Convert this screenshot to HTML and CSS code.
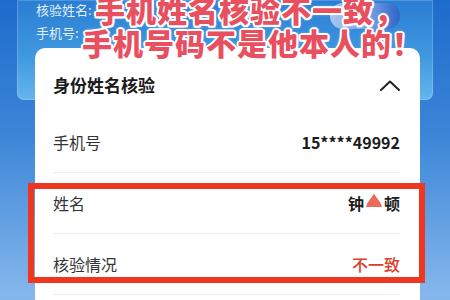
FILE: index.html
```html
<!DOCTYPE html>
<html lang="zh">
<head>
<meta charset="utf-8">
<link rel="stylesheet" href="styles.css">
</head>
<body>
<div class="stage">
  <div class="top-panel">
    <div class="panel-lines">
      <div class="panel-line">核验姓名:</div>
      <div class="panel-line">手机号:</div>
    </div>
    <div class="panel-btn"></div>
  </div>

  <div class="card">
    <div class="card-head">
      <span class="card-title">身份姓名核验</span>
      <svg class="chev" width="20" height="11" viewBox="0 0 20 11"><polyline points="1,10 10,1.5 19,10" fill="none" stroke="#222" stroke-width="2" stroke-linecap="round" stroke-linejoin="round"/></svg>
    </div>
    <div class="row">
      <span class="label">手机号</span>
      <span class="value">15****49992</span>
    </div>
    <div class="row">
      <span class="label">姓名</span>
      <span class="value name">钟<svg class="mask" width="16" height="14" viewBox="0 0 16 14"><path d="M0 14 C1 9 5 6 8 0.5 C11 6 15 9 16 14 Z" fill="#ea6a5c"/></svg>顿</span>
    </div>
    <div class="row">
      <span class="label">核验情况</span>
      <span class="value bad">不一致</span>
    </div>
  </div>

  <div class="caption">
    <div class="cap-line l1">手机姓名核验不一致，</div>
    <div class="cap-line l2">手机号码不是他本人的！</div>
  </div>

  <div class="redbox"></div>
</div>
</body>
</html>
```

FILE: styles.css
```css
html, body {
  margin: 0;
  padding: 0;
}
body {
  width: 450px;
  height: 300px;
  overflow: hidden;
  background: linear-gradient(180deg, #1d6bcb 0%, #3c86d8 45%, #86b8ec 100%);
  font-family: "Noto Sans CJK SC", "Noto Sans", sans-serif;
}
.stage {
  position: relative;
  width: 450px;
  height: 300px;
}
.top-panel {
  margin: 0 17px;
  height: 100px;
  box-sizing: border-box;
  border-radius: 0 0 7px 7px;
  background: linear-gradient(180deg, #2a7ed3 0%, #3f97df 55%, #66b6ec 100%);
  box-shadow: inset 0 0 0 1px rgba(255,255,255,0.18);
  padding: 0 33px 0 19px;
  display: flex;
  justify-content: space-between;
  align-items: flex-start;
}
.panel-lines {
  display: flex;
  flex-direction: column;
  gap: 5px;
  padding-top: 1px;
}
.panel-line {
  font-size: 13px;
  line-height: 18px;
  color: rgba(255,255,255,0.88);
}
.panel-btn {
  margin-top: 3px;
  width: 70px;
  height: 26px;
  border-radius: 13px;
  background: linear-gradient(90deg, #a9c6ee 0%, #6f9be0 60%, #2f63c8 100%);
}
.card {
  position: relative;
  margin: -52px 30px 0 35px;
  background: #fff;
  border-radius: 10px 10px 0 0;
  padding: 0 20px 0 18px;
  height: 260px;
}
.card-head {
  display: flex;
  justify-content: space-between;
  align-items: center;
  padding: 26px 0 16px;
  height: 22px;
}
.card-title {
  font-size: 17px;
  font-weight: 700;
  color: #1a1a1a;
  line-height: 22px;
}
.chev {
  display: block;
}
.row {
  display: flex;
  justify-content: space-between;
  align-items: center;
  height: 60px;
  border-bottom: 1px solid #ededed;
}
.label {
  font-size: 16px;
  color: #333;
}
.value {
  font-size: 16px;
  font-weight: 700;
  color: #1c1c1c;
  display: flex;
  align-items: center;
}
.value.name .mask {
  margin: -6px 2px 0 2px;
}
.value.bad {
  color: #d8412d;
  font-weight: 500;
}
.caption {
  position: absolute;
  top: -7px;
  left: 0;
  width: 450px;
}
.cap-line {
  font-size: 30px;
  font-weight: 900;
  line-height: 33px;
  letter-spacing: 1px;
  color: #e9505f;
  white-space: nowrap;
  text-shadow:
    2px 0 0 #fff, -2px 0 0 #fff, 0 2px 0 #fff, 0 -2px 0 #fff,
    1.5px 1.5px 0 #fff, -1.5px 1.5px 0 #fff, 1.5px -1.5px 0 #fff, -1.5px -1.5px 0 #fff,
    0 0 4px rgba(255,255,255,0.8);
}
.l1 {
  padding-left: 95px;
}
.l2 {
  padding-left: 82px;
}
.redbox {
  position: absolute;
  left: 28px;
  top: 183px;
  width: 397px;
  height: 100px;
  box-sizing: border-box;
  border: 6px solid #ee3620;
}
```
